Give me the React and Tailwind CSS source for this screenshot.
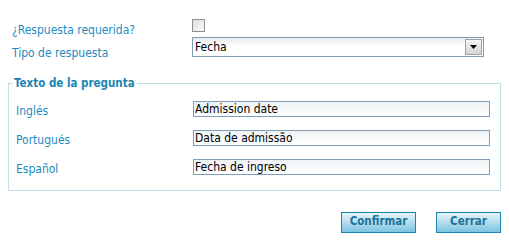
import React, { useState } from "react";

const fields = [
  { label: "Inglés", value: "Admission date" },
  { label: "Portugués", value: "Data de admissão" },
  { label: "Español", value: "Fecha de ingreso" },
];

const App = () => {
  const [required, setRequired] = useState(false);
  const [values, setValues] = useState(fields.map((f) => f.value));

  return (
    <div className="w-[509px] h-[242px] bg-white font-['DejaVu_Sans_Condensed','DejaVu_Sans',sans-serif] text-[12px] leading-none overflow-hidden">
      {/* Top rows */}
      <div className="pt-[19px] pl-[12px]">
        <div className="flex items-center h-[13px]">
          <label className="w-[180px] text-[#1b8cc0] pt-[9px]">
            ¿Respuesta requerida?
          </label>
          <button
            onClick={() => setRequired(!required)}
            className="w-[13px] h-[13px] border border-[#8e8f8f] bg-gradient-to-br from-[#dcdcdc] to-[#fbfbfb] flex items-center justify-center text-[10px]"
          >
            {required ? "✓" : ""}
          </button>
        </div>
        <div className="flex items-start h-[20px] mt-[5px]">
          <label className="w-[180px] text-[#1b8cc0] pt-[10px]">
            Tipo de respuesta
          </label>
          <div className="w-[292px] h-[20px] border border-[#7f9db9] bg-gradient-to-b from-[#ececec] via-white to-white flex items-center justify-between pl-[2px] pr-[1px]">
            <span className="text-black">Fecha</span>
            <div className="w-[17px] h-[16px] border border-[#a3a3a3] bg-gradient-to-b from-[#f4f4f4] to-[#d6d6d6] flex items-center justify-center">
              <svg width="7" height="4" viewBox="0 0 7 4">
                <path d="M0 0h7L3.5 4z" fill="#000" />
              </svg>
            </div>
          </div>
        </div>
      </div>

      {/* Question text group */}
      <fieldset className="ml-[8px] mt-[21px] w-[493px] border border-[#c4dee7] pl-[7px] pr-[10px] pb-[15px]">
        <legend className="-ml-[4px] px-[2px] font-bold text-[11.5px] text-[#1a85b3]">
          Texto de la pregunta
        </legend>
        <div className="flex flex-col gap-[13px] mt-[11px]">
          {fields.map((f, i) => (
            <div key={f.label} className="flex items-center h-[16px]">
              <label className="w-[177px] text-[#1b8cc0] pt-[5px]">
                {f.label}
              </label>
              <input
                type="text"
                value={values[i]}
                onChange={(e) =>
                  setValues(values.map((v, j) => (j === i ? e.target.value : v)))
                }
                className="w-[297px] h-[16px] border border-[#7f9db9] bg-gradient-to-b from-[#eef3f5] to-white px-[1px] text-black text-[12px] outline-none"
              />
            </div>
          ))}
        </div>
      </fieldset>

      {/* Actions */}
      <div className="flex justify-end gap-[20px] pr-[8px] mt-[21px]">
        <button className="w-[75px] h-[21px] border border-[#1984ac] bg-gradient-to-b from-[#e6f5fb] to-[#7cc3e0] text-[#1c7199] font-bold text-[11.5px]">
          Confirmar
        </button>
        <button className="w-[65px] h-[21px] border border-[#1984ac] bg-gradient-to-b from-[#e6f5fb] to-[#7cc3e0] text-[#1c7199] font-bold text-[11.5px]">
          Cerrar
        </button>
      </div>
    </div>
  );
};

export default App;
